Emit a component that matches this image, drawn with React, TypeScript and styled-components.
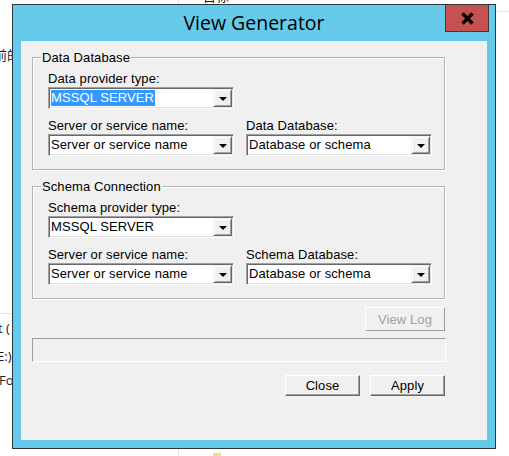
import styled, { createGlobalStyle } from 'styled-components';

const GlobalStyle = createGlobalStyle`
  html, body {
    margin: 0;
    padding: 0;
    background: #ffffff;
    overflow: hidden;
  }
`;

const uiFont = `"Liberation Sans", Arial, sans-serif`;

// Desktop behind the dialog
const Desktop = styled.div`
  position: relative;
  width: 509px;
  height: 456px;
  overflow: hidden;
  background: #ffffff;
  font-family: "Segoe UI", "Open Sans", "Noto Sans CJK SC", sans-serif;
`;

const DesktopText = styled.span<{ $x: number; $y: number }>`
  position: absolute;
  left: ${(p) => p.$x}px;
  top: ${(p) => p.$y}px;
  font-size: 13px;
  line-height: 16px;
  color: #1a1a1a;
  white-space: nowrap;
`;

const DesktopLine = styled.div<{ $x: number; $y: number; $w: number; $h: number }>`
  position: absolute;
  left: ${(p) => p.$x}px;
  top: ${(p) => p.$y}px;
  width: ${(p) => p.$w}px;
  height: ${(p) => p.$h}px;
  background: #e3e3e3;
`;

const FolderTip = styled.div`
  position: absolute;
  left: 213px;
  top: 453px;
  width: 8px;
  height: 3px;
  background: #f3dc8c;
`;

// Dialog window
const Window = styled.div`
  position: absolute;
  left: 12px;
  top: 4px;
  width: 484px;
  height: 445px;
  box-sizing: border-box;
  border: 1px solid #2f3538;
  background: #66cbea;
  display: flex;
  flex-direction: column;
  padding: 0 8px 8px;
  z-index: 1;
`;

const TitleBar = styled.div`
  position: relative;
  height: 36px;
  margin: 0 -8px;
  text-align: center;
  font-family: "Open Sans", "Noto Sans", sans-serif;
  font-size: 19.5px;
  line-height: 36px;
  color: #000;
`;

const CloseBox = styled.div`
  position: absolute;
  top: 0;
  right: 6px;
  width: 44px;
  height: 27px;
  box-sizing: border-box;
  background: #c75050;
  border: 1px solid #3b3b3b;
  border-top: none;
  display: flex;
  align-items: center;
  justify-content: center;
`;

const Client = styled.div`
  flex: 1;
  background: #f0f0f0;
  padding: 16px 0 0 11px;
  display: flex;
  flex-direction: column;
  font-family: ${uiFont};
  font-size: 13px;
  letter-spacing: 0.1px;
  color: #000;
`;

const GroupBox = styled.div<{ $gap?: number }>`
  position: relative;
  width: 413px;
  box-sizing: border-box;
  margin-top: ${(p) => p.$gap ?? 0}px;
  border: 1px solid #b4b4b4;
  box-shadow: inset 1px 1px 0 #ffffff, 1px 1px 0 #ffffff;
  padding: 13px 12px 13px 15px;
  display: grid;
  grid-template-columns: 186px 186px;
  column-gap: 12px;
  row-gap: 9px;
`;

const Legend = styled.span`
  position: absolute;
  top: -8px;
  left: 8px;
  padding: 0 1px;
  background: #f0f0f0;
  line-height: 15px;
`;

const Field = styled.div`
  display: flex;
  flex-direction: column;
`;

const Label = styled.span`
  line-height: 15px;
  margin-bottom: 1px;
  white-space: nowrap;
`;

const Combo = styled.div`
  height: 22px;
  box-sizing: border-box;
  border: 1px solid;
  border-color: #a0a0a0 #ffffff #ffffff #a0a0a0;
  box-shadow: inset 1px 1px 0 #696969, inset -1px -1px 0 #e3e3e3;
  background: #ffffff;
  display: flex;
  align-items: center;
  padding: 1px 1px 1px 2px;
`;

const ComboText = styled.span<{ $selected?: boolean }>`
  flex: 1;
  display: flex;
  align-items: center;
  white-space: nowrap;
  line-height: 16px;

  & > span {
    padding: 0 1px 0 0;
    background: ${(p) => (p.$selected ? '#3399ff' : 'transparent')};
    color: ${(p) => (p.$selected ? '#ffffff' : '#000000')};
  }
`;

const DropButton = styled.div`
  width: 19px;
  height: 18px;
  box-sizing: border-box;
  background: #f0f0f0;
  border: 1px solid;
  border-color: #f0f0f0 #696969 #696969 #f0f0f0;
  box-shadow: inset 1px 1px 0 #ffffff, inset -1px -1px 0 #a0a0a0;
  display: flex;
  align-items: center;
  justify-content: center;

  &::after {
    content: '';
    border-left: 4px solid transparent;
    border-right: 4px solid transparent;
    border-top: 4px solid #000;
    margin-top: 1px;
  }
`;

const ButtonRow = styled.div<{ $gap: number }>`
  width: 413px;
  display: flex;
  justify-content: flex-end;
  gap: 10px;
  margin-top: ${(p) => p.$gap}px;
`;

const PushButton = styled.div<{ $w: number; $h: number; $disabled?: boolean }>`
  width: ${(p) => p.$w}px;
  height: ${(p) => p.$h}px;
  box-sizing: border-box;
  background: #f0f0f0;
  border: 1px solid;
  border-color: ${(p) =>
    p.$disabled ? '#ffffff #a0a0a0 #a0a0a0 #ffffff' : '#ffffff #696969 #696969 #ffffff'};
  box-shadow: ${(p) => (p.$disabled ? 'none' : 'inset -1px -1px 0 #a0a0a0')};
  display: flex;
  align-items: center;
  justify-content: center;
  color: ${(p) => (p.$disabled ? '#a0a0a0' : '#000')};
  line-height: 15px;
`;

const ProgressBar = styled.div`
  width: 414px;
  height: 24px;
  box-sizing: border-box;
  margin-top: 7px;
  border: 1px solid;
  border-color: #a0a0a0 #ffffff #ffffff #a0a0a0;
  background: #f0f0f0;
`;

type ComboProps = { value: string; selected?: boolean };

const ComboBox = ({ value, selected }: ComboProps) => (
  <Combo>
    <ComboText $selected={selected}>
      <span>{value}</span>
    </ComboText>
    <DropButton />
  </Combo>
);

type ConnectionProps = {
  title: string;
  providerLabel: string;
  dbLabel: string;
  selected?: boolean;
  gap?: number;
};

const ConnectionGroup = ({ title, providerLabel, dbLabel, selected, gap }: ConnectionProps) => (
  <GroupBox $gap={gap}>
    <Legend>{title}</Legend>
    <Field>
      <Label>{providerLabel}</Label>
      <ComboBox value="MSSQL SERVER" selected={selected} />
    </Field>
    <div />
    <Field>
      <Label>Server or service name:</Label>
      <ComboBox value="Server or service name" />
    </Field>
    <Field>
      <Label>{dbLabel}</Label>
      <ComboBox value="Database or schema" />
    </Field>
  </GroupBox>
);

export default function App() {
  return (
    <Desktop>
      <GlobalStyle />
      <DesktopText $x={203} $y={-12}>目标</DesktopText>
      <DesktopText $x={-6} $y={47}>前的</DesktopText>
      <DesktopText $x={-2} $y={320}>t (</DesktopText>
      <DesktopText $x={-3} $y={348}>E:)</DesktopText>
      <DesktopText $x={-1} $y={372}>Fo</DesktopText>
      <DesktopLine $x={178} $y={0} $w={1} $h={4} />
      <DesktopLine $x={178} $y={449} $w={1} $h={7} />
      <DesktopLine $x={496} $y={11} $w={13} $h={1} />
      <DesktopLine $x={0} $y={313} $w={12} $h={1} />
      <FolderTip />

      <Window>
        <TitleBar>
          View Generator
          <CloseBox>
            <svg width="15" height="13" viewBox="0 0 15 13">
              <path d="M2.5 1.5 L12.5 11.5 M12.5 1.5 L2.5 11.5" stroke="#000" strokeWidth="3.4" />
            </svg>
          </CloseBox>
        </TitleBar>
        <Client>
          <ConnectionGroup
            title="Data Database"
            providerLabel="Data provider type:"
            dbLabel="Data Database:"
            selected
          />
          <ConnectionGroup
            title="Schema Connection"
            providerLabel="Schema provider type:"
            dbLabel="Schema Database:"
            gap={16}
          />
          <ButtonRow $gap={8}>
            <PushButton $w={80} $h={24} $disabled>View Log</PushButton>
          </ButtonRow>
          <ProgressBar />
          <ButtonRow $gap={13}>
            <PushButton $w={75} $h={21}>Close</PushButton>
            <PushButton $w={75} $h={21}>Apply</PushButton>
          </ButtonRow>
        </Client>
      </Window>
    </Desktop>
  );
}
